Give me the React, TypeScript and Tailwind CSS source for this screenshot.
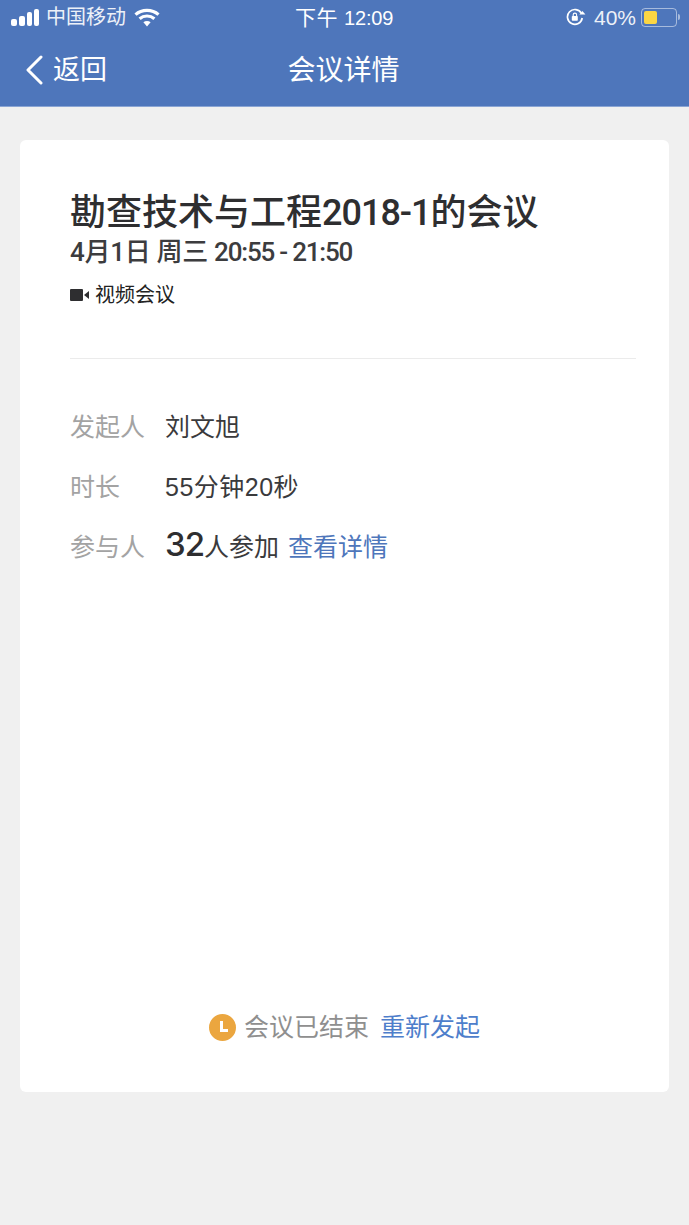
import React from 'react';

const FONT = "font-['Liberation_Sans','Noto_Sans_CJK_SC',sans-serif]";

const StatusBar = () => (
  <div className="h-[34px] flex items-center justify-between pl-[11px] pr-[9px] text-white">
    <div className="flex items-center">
      <div className="flex items-end gap-[2px] h-[17px]">
        <span className="w-[6px] h-[7px] rounded-[2px] bg-white" />
        <span className="w-[6px] h-[10px] rounded-[2px] bg-white" />
        <span className="w-[5px] h-[14px] rounded-[2px] bg-white" />
        <span className="w-[5px] h-[17px] rounded-[2px] bg-white" />
      </div>
      <span className="ml-[7px] text-[20px] leading-none opacity-90">中国移动</span>
      <svg className="ml-[8px]" width="26" height="19" viewBox="0 0 26 19" fill="none" stroke="white" strokeWidth="3.2">
        <path d="M1.5 6.6C7.8 1 18.2 1 24.5 6.6" />
        <path d="M5.6 10.7c4.2-3.6 10.6-3.6 14.8 0" />
        <path d="M13 18.5l-3.6-4.2c2-1.6 5.2-1.6 7.2 0z" fill="white" strokeWidth="0" />
      </svg>
    </div>
    <span className="absolute left-[295px] text-[21px] leading-none tracking-[0.4px]">
      下午 <span className="text-[20px] tracking-[-0.2px]">12:09</span>
    </span>
    <div className="flex items-center">
      <svg width="20" height="18" viewBox="0 0 20 18" fill="none" stroke="white" strokeWidth="1.7">
        <path d="M15.4 5.4A7.4 7.4 0 1 0 16.2 10" />
        <path d="M13.4 6.6h6l-3-3.6z" fill="white" strokeWidth="0" />
        <rect x="5.8" y="8" width="6" height="4.8" rx="0.8" fill="white" strokeWidth="0" />
        <path d="M7.2 8V6.8a1.7 1.7 0 0 1 3.4 0V8" strokeWidth="1.1" />
      </svg>
      <span className="ml-[8px] text-[21px] leading-none opacity-90">40%</span>
      <div className="ml-[5px] w-[36px] h-[19px] rounded-[4px] border border-white/50 p-[2px]">
        <div className="w-[13px] h-full rounded-[2px] bg-[#fbd644]" />
      </div>
      <span className="ml-[1px] w-[2px] h-[6px] rounded-r-[2px] bg-white/50" />
    </div>
  </div>
);

const Row = ({ label, children }: { label: string; children: React.ReactNode }) => (
  <div className="flex items-center h-[60px]">
    <span className="w-[95px] text-[25px] leading-none text-[#a3a3a3]">{label}</span>
    {children}
  </div>
);

export default function App() {
  return (
    <div className={`${FONT} relative w-[689px] h-[1225px] overflow-hidden bg-[#f0f0f0]`}>
      <header className="h-[107px] bg-[#4e76bb] border-b border-[#8aa5d4] text-white">
        <StatusBar />
        <div className="relative h-[72px] flex items-center justify-center">
          <div className="absolute left-[25px] flex items-center">
            <svg width="18" height="30" viewBox="0 0 18 30" fill="none" stroke="white" strokeWidth="3" strokeLinecap="round" strokeLinejoin="round">
              <path d="M16 2L3 15l13 13" />
            </svg>
            <span className="ml-[10px] text-[27px] leading-none">返回</span>
          </div>
          <h1 className="text-[28px] leading-none font-normal -ml-[2px] pt-[2px]">会议详情</h1>
        </div>
      </header>

      <main className="mx-[20px] mt-[33px] h-[952px] rounded-[6px] bg-white pl-[50px] pr-[33px] flex flex-col">
        <div className="pt-[51px] pb-[49px] border-b border-[#ebebeb] font-['Roboto','Noto_Sans_CJK_SC',sans-serif]">
          <h2 className="text-[36px] leading-[44px] font-medium text-[#2e2e30]">
            勘查技术与工程<span className="tracking-[-1px]">2018-1</span>的会议
          </h2>
          <p className="mt-[1px] text-[26px] leading-[32px] font-medium text-[#3c3c3e]">
            <span className="tracking-[-0.3px]">4月1日 周三 </span><span className="tracking-[-1.2px]">20:55 - 21:50</span>
          </p>
          <div className="mt-[13px] flex items-center h-[28px]">
            <svg width="19" height="12" viewBox="0 0 19 12" fill="#2e2e30">
              <rect width="13" height="12" rx="1" />
              <path d="M14 6l5-4v8z" />
            </svg>
            <span className="ml-[6px] text-[20px] leading-none text-[#222]">视频会议</span>
          </div>
        </div>

        <div className="mt-[38px] text-[#3a3a3c]">
          <Row label="发起人">
            <span className="text-[25px] leading-none">刘文旭</span>
          </Row>
          <Row label="时长">
            <span className="text-[25px] leading-none tracking-[0.5px]">55分钟20秒</span>
          </Row>
          <Row label="参与人">
            <span className="flex items-baseline leading-none pb-[6px]">
              <span className="text-[33px] font-medium text-[#2e2e30] font-['Inter',sans-serif] tracking-[-1px]">32</span>
              <span className="text-[25px]">人参加</span>
              <span className="ml-[9px] text-[25px] text-[#4e76bb]">查看详情</span>
            </span>
          </Row>
        </div>

        <div className="mt-auto mb-[51px] -ml-[50px] -mr-[33px] flex items-center justify-center">
          <span className="relative w-[27px] h-[27px] rounded-full bg-[#eba63f]">
            <span className="absolute left-[11px] top-[7px] w-[3px] h-[11px] bg-white" />
            <span className="absolute left-[11px] top-[15px] w-[8px] h-[3px] bg-white" />
          </span>
          <span className="ml-[8px] text-[25px] leading-none text-[#8f8f8f]">会议已结束</span>
          <span className="ml-[11px] text-[25px] leading-none text-[#4e7ecb]">重新发起</span>
        </div>
      </main>
    </div>
  );
}
